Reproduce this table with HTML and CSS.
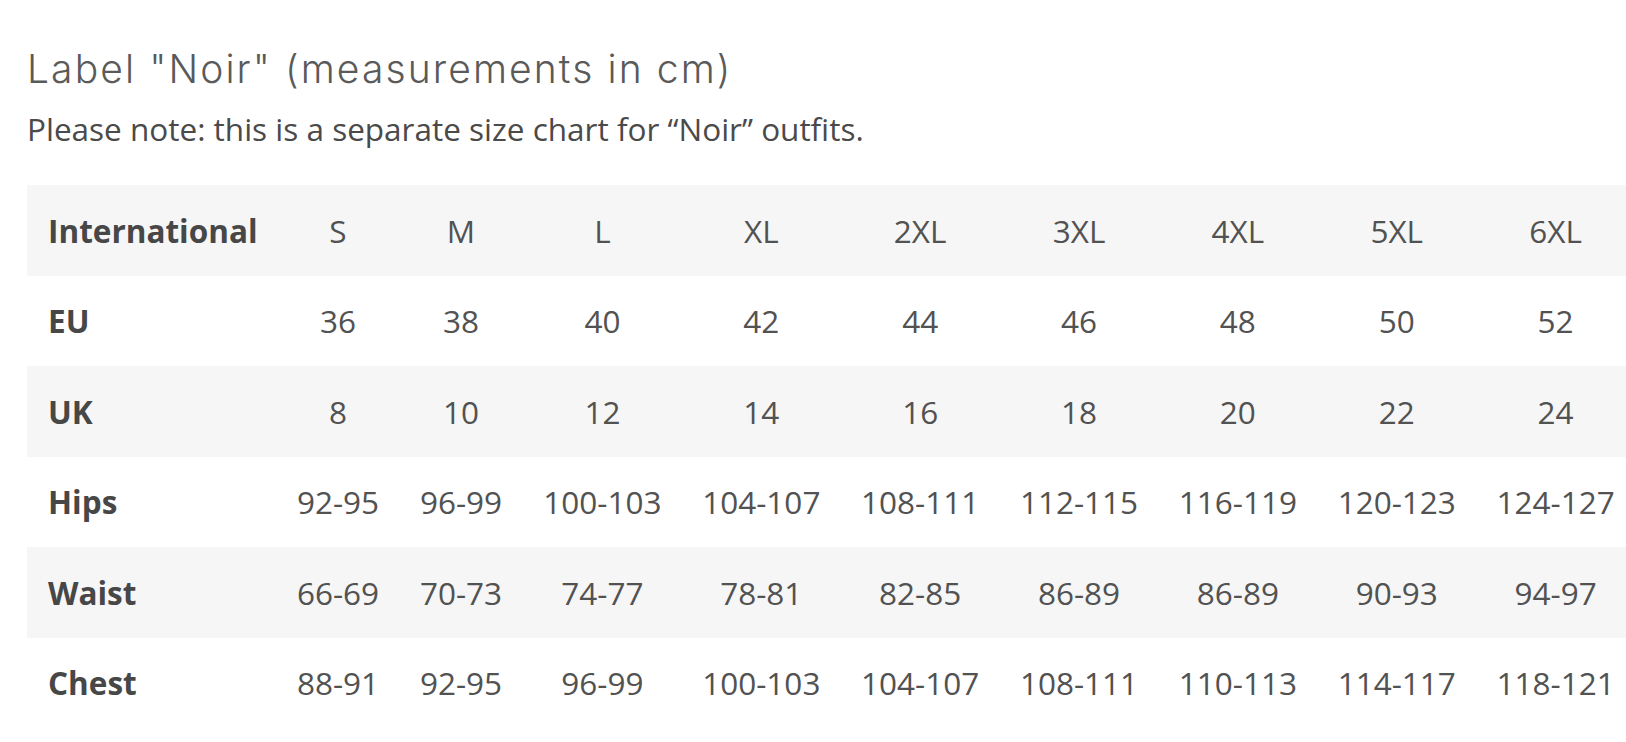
FILE: index.html
```html
<!DOCTYPE html>
<html lang="en">
<head>
<meta charset="utf-8">
<title>Label "Noir" size chart</title>
<link rel="stylesheet" href="styles.css">
</head>
<body>
<main class="page">
  <h2 class="title">Label "Noir" (measurements in cm)</h2>
  <p class="note">Please note: this is a separate size chart for “Noir” outfits.</p>
  <table class="chart">
    <colgroup>
      <col class="c-label">
      <col class="c-s">
      <col class="c-m">
      <col class="c-w"><col class="c-w"><col class="c-w"><col class="c-w"><col class="c-w"><col class="c-w"><col class="c-w">
    </colgroup>
    <tbody>
      <tr class="shade"><th>International</th><td>S</td><td>M</td><td>L</td><td>XL</td><td>2XL</td><td>3XL</td><td>4XL</td><td>5XL</td><td>6XL</td></tr>
      <tr><th>EU</th><td>36</td><td>38</td><td>40</td><td>42</td><td>44</td><td>46</td><td>48</td><td>50</td><td>52</td></tr>
      <tr class="shade"><th>UK</th><td>8</td><td>10</td><td>12</td><td>14</td><td>16</td><td>18</td><td>20</td><td>22</td><td>24</td></tr>
      <tr><th>Hips</th><td>92-95</td><td>96-99</td><td>100-103</td><td>104-107</td><td>108-111</td><td>112-115</td><td>116-119</td><td>120-123</td><td>124-127</td></tr>
      <tr class="shade"><th>Waist</th><td>66-69</td><td>70-73</td><td>74-77</td><td>78-81</td><td>82-85</td><td>86-89</td><td>86-89</td><td>90-93</td><td>94-97</td></tr>
      <tr><th>Chest</th><td>88-91</td><td>92-95</td><td>96-99</td><td>100-103</td><td>104-107</td><td>108-111</td><td>110-113</td><td>114-117</td><td>118-121</td></tr>
    </tbody>
  </table>
</main>
</body>
</html>
```

FILE: styles.css
```css
html, body {
  margin: 0;
  padding: 0;
  background: #ffffff;
  overflow: hidden;
}

body {
  font-family: "Open Sans", "Liberation Sans", sans-serif;
  color: #4a4a4a;
}

.page {
  padding: 46px 0 0 27px;
  width: 1640px;
}

.title {
  margin: 0;
  font-family: Inter, "Open Sans", sans-serif;
  font-weight: 300;
  font-size: 39px;
  line-height: 46px;
  letter-spacing: 2.1px;
  color: #5a5a5a;
}

.note {
  margin: 15px 0 0 0;
  font-size: 31.5px;
  line-height: 43px;
  color: #4a4a4a;
}

.chart {
  margin-top: 35px;
  border-collapse: collapse;
  table-layout: fixed;
  width: 1608px;
}

.c-label { width: 250px; }
.c-s { width: 122px; }
.c-m { width: 124px; }
.c-w { width: 158.86px; }

.chart th,
.chart td {
  height: 90.5px;
  padding: 0;
  font-size: 31.5px;
  vertical-align: middle;
  white-space: nowrap;
}

.chart th {
  text-align: left;
  padding-left: 21px;
  font-weight: 700;
  color: #474747;
}

.chart td {
  text-align: center;
  font-weight: 400;
  color: #525252;
}

.shade {
  background: #f6f6f6;
}
```
